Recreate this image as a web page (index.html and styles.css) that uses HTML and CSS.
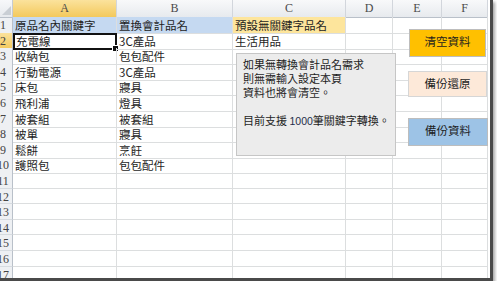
FILE: index.html
```html
<!DOCTYPE html>
<html lang="zh-Hant">
  <head>
    <meta charset="UTF-8" />
    <title>關鍵字轉換</title>
    <link rel="stylesheet" href="styles.css">
  </head>
  <body>
    <div class="frame">
      <div class="sheet">
        <div class="row head">
          <div class="corner"><span class="tri"></span></div>
          <div class="ch sel">A</div>
          <div class="ch">B</div>
          <div class="ch">C</div>
          <div class="ch">D</div>
          <div class="ch">E</div>
          <div class="ch">F</div>
        </div>
        <div class="row">
          <div class="rh"><span>1</span></div>
          <div class="c blue">原品名內關鍵字</div>
          <div class="c blue">置換會計品名</div>
          <div class="c gold">預設無關鍵字品名</div>
          <div class="c"></div><div class="c"></div><div class="c"></div>
        </div>
        <div class="row">
          <div class="rh sel"><span>2</span></div>
          <div class="c active">充電線<span class="handle"></span></div>
          <div class="c">3C產品</div>
          <div class="c">生活用品</div>
          <div class="c"></div><div class="c"></div><div class="c"></div>
        </div>
        <div class="row">
          <div class="rh"><span>3</span></div>
          <div class="c">收納包</div>
          <div class="c">包包配件</div>
          <div class="c"></div><div class="c"></div><div class="c"></div><div class="c"></div>
        </div>
        <div class="row">
          <div class="rh"><span>4</span></div>
          <div class="c">行動電源</div>
          <div class="c">3C產品</div>
          <div class="c"></div><div class="c"></div><div class="c"></div><div class="c"></div>
        </div>
        <div class="row">
          <div class="rh"><span>5</span></div>
          <div class="c">床包</div>
          <div class="c">寢具</div>
          <div class="c"></div><div class="c"></div><div class="c"></div><div class="c"></div>
        </div>
        <div class="row">
          <div class="rh"><span>6</span></div>
          <div class="c">飛利浦</div>
          <div class="c">燈具</div>
          <div class="c"></div><div class="c"></div><div class="c"></div><div class="c"></div>
        </div>
        <div class="row">
          <div class="rh"><span>7</span></div>
          <div class="c">被套組</div>
          <div class="c">被套組</div>
          <div class="c"></div><div class="c"></div><div class="c"></div><div class="c"></div>
        </div>
        <div class="row">
          <div class="rh"><span>8</span></div>
          <div class="c">被單</div>
          <div class="c">寢具</div>
          <div class="c"></div><div class="c"></div><div class="c"></div><div class="c"></div>
        </div>
        <div class="row">
          <div class="rh"><span>9</span></div>
          <div class="c">鬆餅</div>
          <div class="c">烹飪</div>
          <div class="c"></div><div class="c"></div><div class="c"></div><div class="c"></div>
        </div>
        <div class="row">
          <div class="rh"><span>10</span></div>
          <div class="c">護照包</div>
          <div class="c">包包配件</div>
          <div class="c"></div><div class="c"></div><div class="c"></div><div class="c"></div>
        </div>
        <div class="row">
          <div class="rh"><span>11</span></div>
          <div class="c"></div><div class="c"></div><div class="c"></div><div class="c"></div><div class="c"></div><div class="c"></div>
        </div>
        <div class="row">
          <div class="rh"><span>12</span></div>
          <div class="c"></div><div class="c"></div><div class="c"></div><div class="c"></div><div class="c"></div><div class="c"></div>
        </div>
        <div class="row">
          <div class="rh"><span>13</span></div>
          <div class="c"></div><div class="c"></div><div class="c"></div><div class="c"></div><div class="c"></div><div class="c"></div>
        </div>
        <div class="row">
          <div class="rh"><span>14</span></div>
          <div class="c"></div><div class="c"></div><div class="c"></div><div class="c"></div><div class="c"></div><div class="c"></div>
        </div>
        <div class="row">
          <div class="rh"><span>15</span></div>
          <div class="c"></div><div class="c"></div><div class="c"></div><div class="c"></div><div class="c"></div><div class="c"></div>
        </div>
        <div class="row">
          <div class="rh"><span>16</span></div>
          <div class="c"></div><div class="c"></div><div class="c"></div><div class="c"></div><div class="c"></div><div class="c"></div>
        </div>
        <div class="row">
          <div class="rh"><span>17</span></div>
          <div class="c"></div><div class="c"></div><div class="c"></div><div class="c"></div><div class="c"></div><div class="c"></div>
        </div>
      </div>

      <div class="note">
        <p>如果無轉換會計品名需求</p>
        <p>則無需輸入設定本頁</p>
        <p>資料也將會清空。</p>
        <p>&nbsp;</p>
        <p>目前支援 <span class="num">1000</span>筆關鍵字轉換。</p>
      </div>

      <div class="btn btn-clear">清空資料</div>
      <div class="btn btn-restore">備份還原</div>
      <div class="btn btn-backup">備份資料</div>
    </div>
  </body>
</html>
```

FILE: styles.css
```css
body {
  margin: 0;
  padding: 0;
  background-color: #fff;
  font-family: "Noto Sans CJK TC", "Noto Sans", sans-serif;
}

.frame {
  position: relative;
  width: 490px;
  height: 278px;
  overflow: hidden;
  background-color: #fff;
  border-right: 3px solid #4a4a4a;
  border-bottom: 3px solid #4a4a4a;
  box-shadow: 2px 2px 3px rgba(0, 0, 0, 0.35);
}

.sheet {
  display: flex;
  flex-direction: column;
}

.row {
  display: grid;
  grid-template-columns: 13px 104px 116px 113px 47px 49px 46px 2px;
  height: 15.6px;
  flex-shrink: 0;
}

.row.head {
  height: 17px;
}

.corner {
  position: relative;
  background: linear-gradient(#f7f8fa, #e6e9ed);
  border-right: 1px solid #c6cbd2;
  border-bottom: 1px solid #b9c0c9;
  box-sizing: border-box;
}

.tri {
  position: absolute;
  right: 1px;
  bottom: 2px;
  width: 0;
  height: 0;
  border-left: 9px solid transparent;
  border-bottom: 9px solid #c9ced4;
}

.ch {
  background: linear-gradient(#f8f9fa, #e7eaee);
  border-right: 1px solid #d2d6dc;
  border-bottom: 1px solid #b9c0c9;
  box-sizing: border-box;
  font-family: "Liberation Serif", serif;
  font-size: 12px;
  color: #4a4a4a;
  text-align: center;
  line-height: 17px;
}

.ch.sel {
  background: linear-gradient(#fbe29c, #f3c95c);
  border-bottom-color: #c89a30;
}

.rh {
  display: flex;
  justify-content: center;
  overflow: hidden;
  background-color: #eef0f3;
  border-right: 1px solid #b9c0c9;
  border-bottom: 1px solid #d6dbe0;
  box-sizing: border-box;
  font-family: "Liberation Serif", serif;
  font-size: 12px;
  color: #444;
  line-height: 16px;
}

.rh span {
  display: block;
  flex-shrink: 0;
  width: 19px;
  margin-left: -6px;
  text-align: center;
}

.rh.sel {
  background: linear-gradient(#fbe29c, #f3c95c);
}

.c {
  position: relative;
  border-right: 1px solid #dcdedf;
  border-bottom: 1px solid #dcdedf;
  box-sizing: border-box;
  padding-left: 2px;
  font-size: 11.5px;
  line-height: 16px;
  color: #1e1e1e;
  white-space: nowrap;
}

.c.blue {
  background-color: #c5d9f1;
}

.c.gold {
  background-color: #fde59c;
}

.c.active {
  border: 2px solid #111;
  padding-left: 1px;
  line-height: 13px;
}

.handle {
  position: absolute;
  right: -4px;
  bottom: -4px;
  width: 5px;
  height: 5px;
  background-color: #111;
  border: 1px solid #fff;
}

.note {
  position: absolute;
  left: 236px;
  top: 53px;
  width: 160px;
  height: 103px;
  box-sizing: border-box;
  padding: 3px 6px;
  background-color: #ececec;
  border: 1.5px solid #c6c6c6;
  font-size: 11px;
  line-height: 14px;
  color: #1e1e1e;
  white-space: nowrap;
}

.note p {
  margin: 0;
}

.num {
  font-family: "Liberation Sans", sans-serif;
  font-size: 10.5px;
  color: #1f2c4a;
}

.btn {
  position: absolute;
  display: flex;
  justify-content: center;
  box-sizing: border-box;
  padding-top: 4px;
  font-size: 11.5px;
  line-height: 14px;
  color: #1e1e1e;
  border: 1px solid #bdbdbd;
}

.btn-clear {
  left: 409px;
  top: 29px;
  width: 77px;
  height: 28px;
  background-color: #ffc000;
}

.btn-restore {
  left: 408px;
  top: 71px;
  width: 79px;
  height: 26px;
  background-color: #fde9d9;
  border-color: #d6d6d6;
}

.btn-backup {
  left: 408px;
  top: 118px;
  width: 80px;
  height: 28px;
  background-color: #9dc3e6;
}
```
